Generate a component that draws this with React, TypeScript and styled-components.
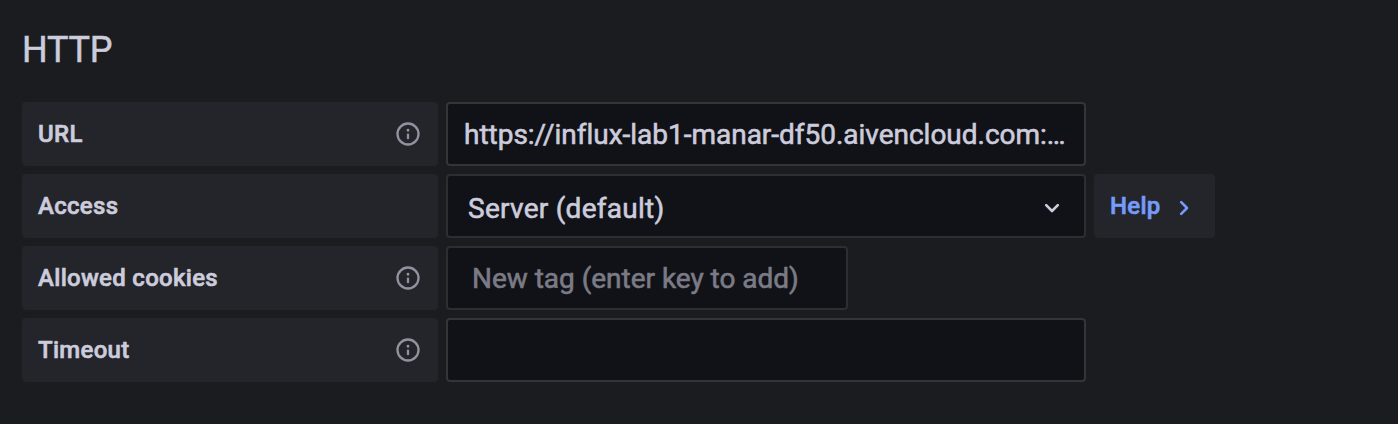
import React from 'react';
import styled, { createGlobalStyle } from 'styled-components';

const GlobalStyle = createGlobalStyle`
  *, *::before, *::after { box-sizing: border-box; }
  html, body { margin: 0; background: #1b1c1f; }
  body {
    font-family: Roboto, "Liberation Sans", sans-serif;
    color: #ccccdc;
    -webkit-font-smoothing: antialiased;
  }
`;

const Page = styled.main`
  height: 424px;
  padding: 28px 22px 0;
  background: #1b1c1f;
`;

const Heading = styled.h3`
  margin: 0 0 30px;
  font-size: 36px;
  font-weight: 400;
  line-height: 44px;
  letter-spacing: -0.2px;
  -webkit-text-stroke: 0.5px currentColor;
`;

const Form = styled.div`
  display: flex;
  flex-direction: column;
  gap: 8px;
`;

const Row = styled.div`
  display: flex;
  gap: 8px;
  height: 64px;
`;

const Label = styled.label`
  display: flex;
  align-items: center;
  justify-content: space-between;
  width: 416px;
  padding: 0 16px;
  border-radius: 4px;
  background: #24252a;
  font-size: 24px;
  font-weight: 500;
  line-height: 64px;
  letter-spacing: 0.3px;
  -webkit-text-stroke: 0.6px currentColor;
`;

const Field = styled.div<{ $width?: number; $inset?: number; $muted?: boolean }>`
  display: flex;
  align-items: center;
  justify-content: space-between;
  width: ${({ $width = 640 }) => $width}px;
  padding: 0 16px 0 ${({ $inset = 16 }) => $inset}px;
  border: 2px solid ${({ $muted }) => ($muted ? '#2d2e32' : '#343539')};
  border-radius: 4px;
  background: #111217;
  font-size: 28px;
  line-height: 44px;
`;

const Value = styled.span<{ $drop?: number; $spacing?: number }>`
  flex: 1;
  min-width: 0;
  padding-top: ${({ $drop = 2 }) => $drop}px;
  white-space: nowrap;
  letter-spacing: ${({ $spacing = -0.02 }) => $spacing}px;
  -webkit-text-stroke: 0.6px currentColor;
`;

const Placeholder = styled(Value)`
  color: #7b7b86;
`;

const HelpButton = styled.button`
  display: flex;
  align-items: center;
  gap: 9px;
  width: 121px;
  padding: 0 16px;
  border: 0;
  border-radius: 4px;
  background: #24252a;
  color: #759cfa;
  font: 500 24px/64px Roboto, "Liberation Sans", sans-serif;
  letter-spacing: 0.26px;
  -webkit-text-stroke: 0.6px currentColor;
`;

const InfoSvg = styled.svg`
  color: #92929e;
`;

const ChevronSvg = styled.svg<{ $end?: number }>`
  flex: none;
  margin: 4px ${({ $end = 0 }) => $end}px 0 0;
`;

const InfoIcon = () => (
  <InfoSvg width="28" height="28" viewBox="0 0 24 24" fill="currentColor">
    <path d="M12,2A10,10,0,1,0,22,12,10,10,0,0,0,12,2Zm0,18a8,8,0,1,1,8-8A8,8,0,0,1,12,20Zm0-8.500a1,1,0,0,0-1,1v3a1,1,0,0,0,2,0v-3A1,1,0,0,0,12,11.500Zm0-4a1.250,1.250,0,1,0,1.250,1.250A1.250,1.250,0,0,0,12,7.500Z" />
  </InfoSvg>
);

const ChevronDown = () => (
  <ChevronSvg $end={2} width="28" height="28" viewBox="0 0 28 28" fill="none" stroke="currentColor" strokeWidth="2.6" strokeLinecap="round" strokeLinejoin="round">
    <path d="M8.200 11.200 14 17l5.800-5.800" />
  </ChevronSvg>
);

const ChevronRight = () => (
  <ChevronSvg width="28" height="28" viewBox="0 0 28 28" fill="none" stroke="currentColor" strokeWidth="2.6" strokeLinecap="round" strokeLinejoin="round">
    <path d="m11.200 8.200 5.800 5.800-5.800 5.800" />
  </ChevronSvg>
);

export default function App() {
  return (
    <>
      <GlobalStyle />
      <Page>
        <Heading>HTTP</Heading>
        <Form>
          <Row>
            <Label>URL<InfoIcon /></Label>
            <Field>
              <Value>https://influx-lab1-manar-df50.aivencloud.com:…</Value>
            </Field>
          </Row>
          <Row>
            <Label>Access</Label>
            <Field $inset={20} $muted>
              <Value $drop={6} $spacing={0.27}>Server (default)</Value>
              <ChevronDown />
            </Field>
            <HelpButton type="button">Help<ChevronRight /></HelpButton>
          </Row>
          <Row>
            <Label>Allowed cookies<InfoIcon /></Label>
            <Field $width={402} $inset={24} $muted>
              <Placeholder>New tag (enter key to add)</Placeholder>
            </Field>
          </Row>
          <Row>
            <Label>Timeout<InfoIcon /></Label>
            <Field />
          </Row>
        </Form>
      </Page>
    </>
  );
}
